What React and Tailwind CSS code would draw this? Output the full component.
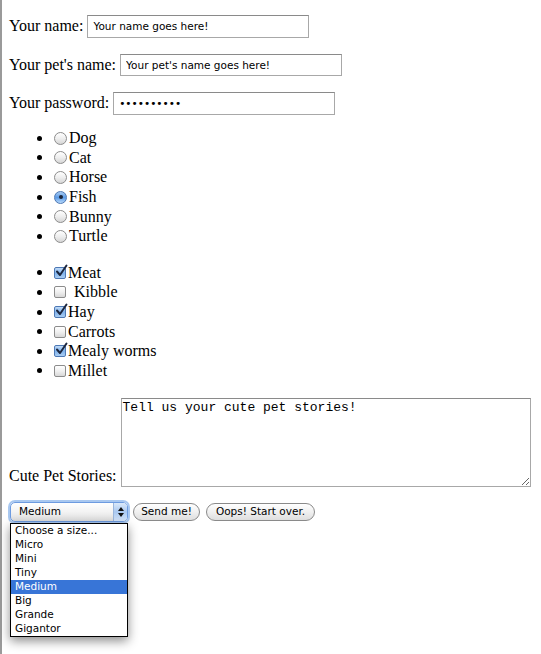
import React from "react";

const pets = [
  { label: "Dog" },
  { label: "Cat" },
  { label: "Horse" },
  { label: "Fish", checked: true },
  { label: "Bunny" },
  { label: "Turtle" },
];

const foods = [
  { label: "Meat", checked: true },
  { label: "Kibble", extraSpace: true },
  { label: "Hay", checked: true },
  { label: "Carrots" },
  { label: "Mealy worms", checked: true },
  { label: "Millet" },
];

const sizes = ["Choose a size...", "Micro", "Mini", "Tiny", "Medium", "Big", "Grande", "Gigantor"];

const Bullet = () => (
  <span className="ml-[28px] w-[5px] h-[5px] rounded-full bg-black shrink-0" />
);

const Radio = ({ checked }) =>
  checked ? (
    <span className="ml-[12px] w-[13px] h-[13px] rounded-full border border-[#4d78b4] bg-gradient-to-b from-[#a9cdf3] via-[#5c9be6] to-[#b6d8fa] flex items-center justify-center shrink-0">
      <span className="w-[4px] h-[4px] rounded-full bg-[#1a2438]" />
    </span>
  ) : (
    <span className="ml-[12px] w-[13px] h-[13px] rounded-full border border-[#8c8c8c] bg-gradient-to-b from-[#ffffff] via-[#eeeeee] to-[#d6d6d6] shrink-0" />
  );

const Checkbox = ({ checked }) => (
  <span className="relative ml-[12px] w-[12px] h-[12px] shrink-0">
    {checked ? (
      <span className="absolute inset-0 rounded-[2px] border border-[#4d78b4] bg-gradient-to-b from-[#c2dcf8] via-[#7fb2ec] to-[#a9cdf3]" />
    ) : (
      <span className="absolute inset-0 rounded-[2px] border border-[#8c8c8c] bg-gradient-to-b from-[#ffffff] via-[#f0f0f0] to-[#d8d8d8]" />
    )}
    {checked && (
      <svg className="absolute -top-[3px] left-[1px] w-[13px] h-[14px]" viewBox="0 0 13 14" fill="none">
        <path d="M2 7.5 L5 11 L11.5 1.5" stroke="#1c2740" strokeWidth="2" strokeLinecap="round" strokeLinejoin="round" />
      </svg>
    )}
  </span>
);

const TextRow = ({ label, children }) => (
  <div className="flex items-center h-[22.5px]">
    <span className="text-[16px] leading-none whitespace-nowrap">{label}</span>
    {children}
  </div>
);

const inputClass =
  "ml-[4px] w-[222px] h-[22.5px] border border-[#a8a8a8] border-t-[#8a8a8a] bg-white px-[5px] text-[10.5px] text-black font-['DejaVu_Sans',sans-serif] outline-none";

export default function App() {
  return (
    <div className="min-h-[654px] border-l-2 border-[#9a9a9a] bg-white pl-[7px] pt-[15px] text-black font-['Liberation_Serif',serif]">
      <TextRow label="Your name:">
        <input className={inputClass} readOnly value="Your name goes here!" />
      </TextRow>
      <div className="mt-[16px]">
        <TextRow label="Your pet's name:">
          <input className={inputClass} readOnly value="Your pet's name goes here!" />
        </TextRow>
      </div>
      <div className="mt-[16px]">
        <TextRow label="Your password:">
          <input className={inputClass} type="password" readOnly value="1234567890" />
        </TextRow>
      </div>

      {/* Pets */}
      <ul className="mt-[14px]">
        {pets.map((p) => (
          <li key={p.label} className="flex items-center h-[19.6px] text-[16px]">
            <Bullet />
            <Radio checked={p.checked} />
            <span className="ml-[2px] leading-none">{p.label}</span>
          </li>
        ))}
      </ul>

      {/* Food */}
      <ul className="mt-[17px]">
        {foods.map((f) => (
          <li key={f.label} className="flex items-center h-[19.6px] text-[16px]">
            <Bullet />
            <Checkbox checked={f.checked} />
            <span className={`${f.extraSpace ? "ml-[8px]" : "ml-[2px]"} leading-none`}>{f.label}</span>
          </li>
        ))}
      </ul>

      {/* Stories */}
      <div className="mt-[17px] flex items-end">
        <span className="text-[16px] leading-[18px] whitespace-nowrap pb-[2px]">Cute Pet Stories:</span>
        <textarea
          readOnly
          value="Tell us your cute pet stories!"
          className="ml-[4px] w-[410px] h-[89px] border border-[#a8a8a8] border-t-[#8a8a8a] px-[1px] py-[1px] text-[13px] leading-[15px] font-['Liberation_Mono',monospace] outline-none resize"
        />
      </div>

      {/* Controls */}
      <div className="mt-[15px] flex items-center font-['DejaVu_Sans',sans-serif]">
        <div className="relative">
          <div className="ml-[1px] w-[118px] h-[20px] rounded-[5px] border border-[#6d9be0] shadow-[0_0_0_2px_#a9c8f0] bg-gradient-to-b from-[#ffffff] via-[#f3f3f3] to-[#dcdcdc] flex items-center overflow-hidden">
            <span className="flex-1 pl-[8px] text-[10.5px] leading-none">Medium</span>
            <span className="w-[14px] h-full border-l border-[#9bb6dc] bg-gradient-to-b from-[#dbe9fa] via-[#a9c8f0] to-[#d6e6fa] flex flex-col items-center justify-center gap-[2px]">
              <svg width="6" height="4" viewBox="0 0 6 4"><path d="M3 0 L6 4 L0 4 Z" fill="#111" /></svg>
              <svg width="6" height="4" viewBox="0 0 6 4"><path d="M0 0 L6 0 L3 4 Z" fill="#111" /></svg>
            </span>
          </div>
          <ul className="absolute left-[1px] top-[21px] w-[118px] border border-black bg-white shadow-[0_4px_10px_rgba(0,0,0,0.45)] z-10">
            {sizes.map((s) => (
              <li
                key={s}
                className={`h-[14px] pl-[4px] flex items-center text-[10.5px] leading-none ${
                  s === "Medium" ? "bg-[#3875d7] text-white" : "text-black"
                }`}
              >
                {s}
              </li>
            ))}
          </ul>
        </div>
        <button className="ml-[5px] w-[67px] h-[18px] rounded-full border border-[#8a8a8a] bg-gradient-to-b from-[#ffffff] via-[#f0f0f0] to-[#dedede] text-[10.5px] leading-none text-black">
          Send me!
        </button>
        <button className="ml-[6px] w-[109px] h-[18px] rounded-full border border-[#8a8a8a] bg-gradient-to-b from-[#ffffff] via-[#f0f0f0] to-[#dedede] text-[10.5px] leading-none text-black">
          Oops! Start over.
        </button>
      </div>
    </div>
  );
}
